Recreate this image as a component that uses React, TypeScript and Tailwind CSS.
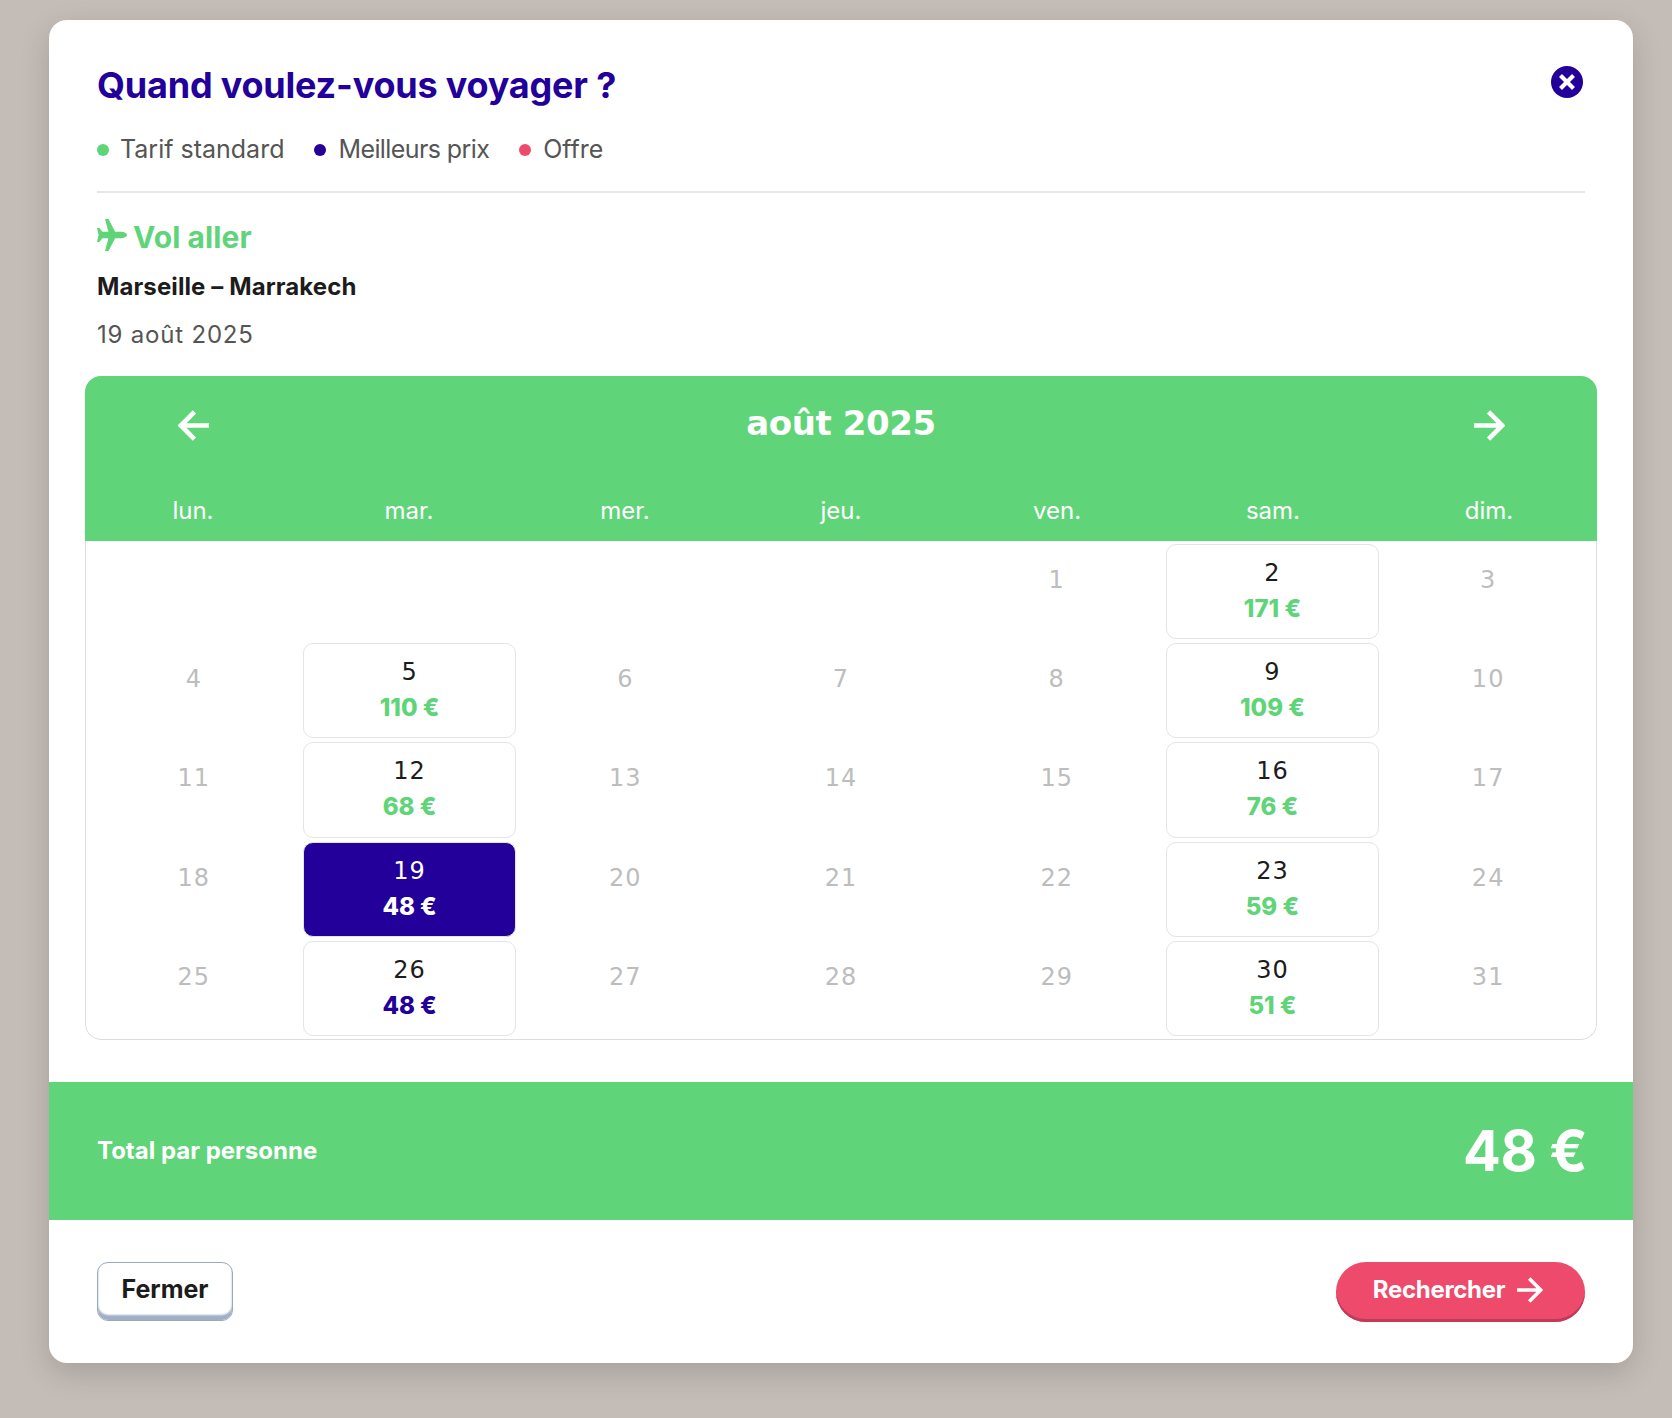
import React from "react";

const WEEKDAYS = ["lun.", "mar.", "mer.", "jeu.", "ven.", "sam.", "dim."];

type Day = { n: number; price?: string; kind?: "std" | "best" | "sel" };

const DAYS: Record<number, Day> = {
  2: { n: 2, price: "171 €", kind: "std" },
  5: { n: 5, price: "110 €", kind: "std" },
  9: { n: 9, price: "109 €", kind: "std" },
  12: { n: 12, price: "68 €", kind: "std" },
  16: { n: 16, price: "76 €", kind: "std" },
  19: { n: 19, price: "48 €", kind: "sel" },
  23: { n: 23, price: "59 €", kind: "std" },
  26: { n: 26, price: "48 €", kind: "best" },
  30: { n: 30, price: "51 €", kind: "std" },
};

const Plane = () => (
  <svg viewBox="0 0 30 32" className="w-[30px] h-[32px] shrink-0 -mt-[4px]" fill="currentColor" aria-hidden="true">
    <path d="M30 16c0-1.4-2.4-3.2-6.5-3.2h-5.4L11.6 0H8l3.4 12.8H5.4L2.4 9H0l1.6 7L0 23h2.4l3-3.8h6L8 32h3.6l6.5-12.8h5.4c4.1 0 6.5-1.8 6.5-3.2z" />
  </svg>
);

// Butt-ended arrow, the icon packages only have round or thin ones
const Arrow = ({ dir, size, width }: { dir: "left" | "right"; size: number; width: number }) => (
  <svg viewBox="0 0 33 32" width={size} height={size} fill="none" stroke="currentColor" strokeWidth={width} aria-hidden="true">
    {dir === "left" ? <path d="M17.5 1.5L3 16l14.5 14.5M3 16h30" /> : <path d="M15.5 1.5L30 16 15.5 30.5M30 16H0" />}
  </svg>
);

const Cell = ({ day }: { day: number }) => {
  const d = DAYS[day];
  if (!d) {
    return (
      <div className="h-[95.2px] pt-[19px] text-center text-[24px] leading-[34px] tracking-[1px] text-[#bdbdbd] font-['DejaVu_Sans',sans-serif]">
        {day}
      </div>
    );
  }
  const selected = d.kind === "sel";
  return (
    <div
      className={`h-[95.2px] mx-px rounded-[10px] border pt-[10px] flex flex-col items-center ${
        selected ? "bg-[#220099] border-[#e4e4e4] text-white" : "bg-white border-[#e4e4e4] text-[#1c1c1c]"
      }`}
    >
      <span className="text-[24px] leading-[36px] tracking-[1px] font-['DejaVu_Sans',sans-serif]">{d.n}</span>
      <span
        className={`text-[24px] leading-[36px] font-extrabold ${
          selected ? "text-white" : d.kind === "best" ? "text-[#220099]" : "text-[#60d478]"
        }`}
      >
        {d.price}
      </span>
    </div>
  );
};

export default function App() {
  const blanks = [0, 1, 2, 3];
  const days = Array.from({ length: 31 }, (_, i) => i + 1);

  return (
    <div className="min-h-[1418px] bg-[#c4bcb6] pt-[20px] pl-[49px] font-['Inter',sans-serif]">
      <div className="w-[1584px] h-[1343px] bg-white rounded-[18px] shadow-[0_10px_30px_rgba(0,0,0,0.15)] overflow-hidden flex flex-col">
        <div className="px-[48px]">
          <div className="flex justify-between items-start pt-[42px]">
            <h1 className="text-[36px] leading-[46px] font-bold tracking-[-0.2px] text-[#220099]">
              Quand voulez-vous voyager ?
            </h1>
            <button className="mt-[4px] w-[32px] h-[32px] rounded-full bg-[#220099] flex items-center justify-center mr-[2px]">
              <svg viewBox="0 0 18 18" className="w-[18px] h-[18px]" aria-hidden="true">
                <path d="M2.5 2.5l13 13M15.5 2.5l-13 13" stroke="#fff" strokeWidth="4.2" fill="none" />
              </svg>
            </button>
          </div>
          <div className="flex items-center mt-[25px] h-[34px] text-[25px] text-[#555555]">
            <span className="w-[12px] h-[12px] rounded-full bg-[#60d478]" />
            <span className="ml-[11px]">Tarif standard</span>
            <span className="w-[12px] h-[12px] rounded-full bg-[#220099] ml-[30px]" />
            <span className="ml-[12px] tracking-[-0.6px]">Meilleurs prix</span>
            <span className="w-[12px] h-[12px] rounded-full bg-[#ee4a6c] ml-[30px]" />
            <span className="ml-[12px]">Offre</span>
          </div>
          <div className="h-[2px] bg-[#e6e6e6] mt-[24px]" />
          <div className="flex items-center gap-[6px] mt-[25px] text-[#60d478]">
            <Plane />
            <span className="text-[30px] leading-[38px] font-bold tracking-[0.1px]">Vol aller</span>
          </div>
          <div className="mt-[16px] text-[24px] leading-[30px] font-bold tracking-[0.1px] text-[#1c1c1c]">
            Marseille – Marrakech
          </div>
          <div className="mt-[18px] text-[24px] leading-[30px] tracking-[0.8px] text-[#555555]">19 août 2025</div>
        </div>

        <div className="mx-[36px] mt-[26px] rounded-[16px] overflow-hidden">
          <div className="bg-[#60d478] h-[165px] text-white">
            <div className="grid grid-cols-7 pt-[25px] h-[116px]">
              <div className="flex justify-center pt-[9px]">
                <Arrow dir="left" size={31} width={5} />
              </div>
              <div className="col-span-5 text-center text-[34px] leading-[44px] font-bold tracking-[-0.4px] font-['DejaVu_Sans',sans-serif]">
                août 2025
              </div>
              <div className="flex justify-center pt-[9px]">
                <Arrow dir="right" size={31} width={5} />
              </div>
            </div>
            <div className="grid grid-cols-7 pt-[2px]">
              {WEEKDAYS.map((w) => (
                <div key={w} className="text-center text-[24px] leading-[34px]">
                  {w}
                </div>
              ))}
            </div>
          </div>
          <div className="grid grid-cols-7 gap-y-[4px] pt-[3px] pb-[3px] border-x border-b border-[#dddddd] rounded-b-[16px]">
            {blanks.map((b) => (
              <div key={b} className="h-[95.2px]" />
            ))}
            {days.map((d) => (
              <Cell key={d} day={d} />
            ))}
          </div>
        </div>

        <div className="mt-[42px] h-[138px] bg-[#60d478] text-white flex items-center justify-between px-[48px]">
          <span className="text-[24px] font-bold">Total par personne</span>
          <span className="text-[56px] font-bold tracking-[-0.5px] -mr-[2px]">48 €</span>
        </div>

        <div className="flex justify-between items-start px-[48px] pt-[42px]">
          <button className="w-[136px] h-[59px] rounded-[11px] bg-white border border-[#9aa9bf] shadow-[inset_0_-5px_2px_#a0afc4] text-[25px] font-bold text-[#1c1c1c] pb-[4px]">
            Fermer
          </button>
          <button className="w-[249px] h-[60px] rounded-full bg-[#ee4a6c] shadow-[inset_0_-3px_0_#c03a5a] text-white flex items-center justify-center gap-[12px] pb-[3px] pr-[5px]">
            <span className="text-[24px] font-bold tracking-[-0.3px]">Rechercher</span>
            <Arrow dir="right" size={26} width={4.6} />
          </button>
        </div>
      </div>
    </div>
  );
}
